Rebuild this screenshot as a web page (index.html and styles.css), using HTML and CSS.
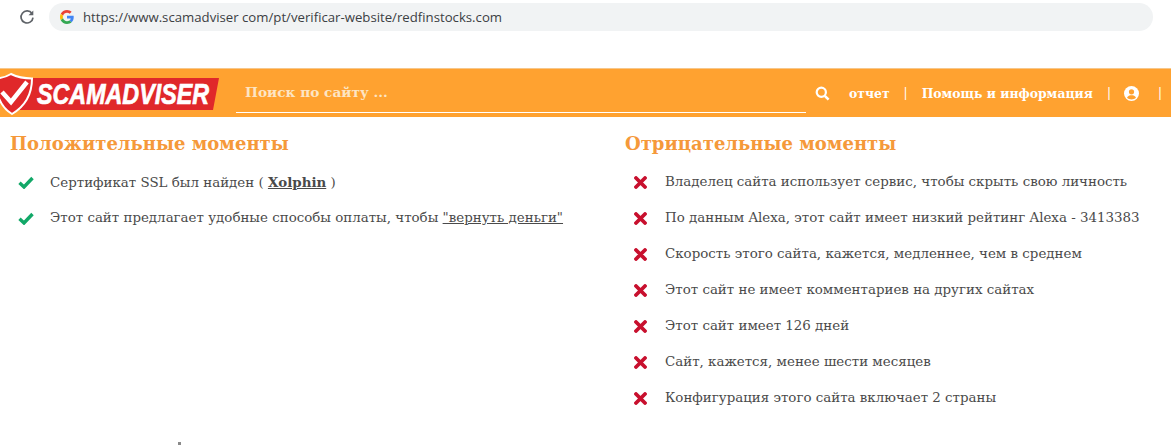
FILE: index.html
```html
<!DOCTYPE html>
<html lang="ru">
<head>
    <meta charset="UTF-8">
    <meta name="viewport" content="width=device-width, initial-scale=1.0">
    <title>Scamadviser</title>
    <link rel="stylesheet" href="styles.css">
</head>
<body>
    <!-- Icon shapes -->
    <svg class="icon-defs" width="0" height="0">
        <symbol id="icon-check" viewBox="0 0 16 13">
            <path d="M1.500 6.800L6 11L14.500 2" fill="none" stroke="#12a868" stroke-width="3.400"/>
        </symbol>
        <symbol id="icon-cross" viewBox="0 0 13 13">
            <path d="M2 2L11 11M11 2L2 11" fill="none" stroke="#c8102e" stroke-width="3.800" stroke-linecap="round"/>
        </symbol>
    </svg>

    <!-- Browser bar -->
    <div class="browser-bar">
        <svg class="reload-icon" width="16" height="16" viewBox="0 0 16 16">
            <path d="M13 4.600A6 6 0 1 0 14 8.600" fill="none" stroke="#5f6368" stroke-width="1.700"/>
            <path d="M14.300 1.400V6.200H9.500Z" fill="#5f6368"/>
        </svg>
        <div class="address-bar">
            <svg class="g-icon" width="14" height="14" viewBox="0 0 48 48">
                <path fill="#ea4335" d="M24 9.500c3.500 0 6.700 1.300 9.100 3.500l6.800-6.800C35.800 2.400 30.300 0 24 0 14.600 0 6.500 5.400 2.600 13.200l7.900 6.100C12.400 13.700 17.700 9.500 24 9.500z"/>
                <path fill="#4285f4" d="M47 24.500c0-1.600-.1-3.100-.4-4.500H24v9h12.900c-.6 3-2.200 5.500-4.700 7.200l7.600 5.900C44.300 37.900 47 31.800 47 24.500z"/>
                <path fill="#fbbc05" d="M10.500 28.700c-.5-1.400-.8-3-.8-4.700s.3-3.300.8-4.700l-7.900-6.100C.9 16.500 0 20.100 0 24s.9 7.500 2.600 10.800l7.900-6.100z"/>
                <path fill="#34a853" d="M24 48c6.500 0 11.900-2.100 15.800-5.900l-7.600-5.900c-2.100 1.400-4.900 2.300-8.200 2.300-6.300 0-11.600-4.200-13.500-9.800l-7.900 6.100C6.500 42.600 14.600 48 24 48z"/>
            </svg>
            <span class="url">https://www.scamadviser com/pt/verificar-website/redfinstocks.com</span>
        </div>
    </div>

    <!-- Header -->
    <header class="site-header">
        <svg class="logo" width="220" height="48" viewBox="0 0 220 48">
            <path d="M20 9H219L213 41H20Z" fill="#e0282a"/>
            <path d="M11 5C17 8 25 9.500 32 9.500C32 24 27 36 12 45C2 39 -4 29 -5 9.500C2 9.500 6 8 11 5Z" fill="#e0282a" stroke="#fff" stroke-width="2"/>
            <path d="M2 23L11 33L27 13" fill="none" stroke="#fff" stroke-width="4.500"/>
            <text class="logo-text" x="37" y="35" textLength="172" lengthAdjust="spacingAndGlyphs">SCAMADVISER</text>
        </svg>
        <div class="search-box">Поиск по сайту ...</div>
        <nav class="nav-links">
            <svg class="nav-search" width="15" height="15" viewBox="0 0 15 15">
                <circle cx="6.300" cy="6.300" r="4.600" fill="none" stroke="#fff" stroke-width="2.200"/>
                <path d="M9.800 9.800L13.600 13.600" stroke="#fff" stroke-width="2.600"/>
            </svg>
            <a class="nav-report">отчет</a>
            <span class="nav-sep">|</span>
            <a class="nav-help">Помощь и информация</a>
            <span class="nav-sep">|</span>
            <svg class="nav-user" width="15" height="15" viewBox="0 0 15 15">
                <circle cx="7.500" cy="7.500" r="7.500" fill="#fff"/>
                <circle cx="7.500" cy="5.800" r="2.600" fill="#ffa230"/>
                <path d="M3 11.800C4 9.800 5.500 9.300 7.500 9.300S11 9.800 12 11.800C10.800 13 9.300 13.500 7.500 13.500S4.200 13 3 11.800Z" fill="#ffa230"/>
            </svg>
            <span class="nav-sep">|</span>
        </nav>
    </header>

    <!-- Moments -->
    <main class="moments">
        <section>
            <h2>Положительные моменты</h2>
            <ul class="moments-list good">
                <li><svg class="mark"><use href="#icon-check"/></svg><span>Сертификат SSL был найден ( <a class="strong-link">Xolphin</a> )</span></li>
                <li><svg class="mark"><use href="#icon-check"/></svg><span>Этот сайт предлагает удобные способы оплаты, чтобы <a class="plain-link">"вернуть деньги"</a></span></li>
            </ul>
        </section>
        <section>
            <h2>Отрицательные моменты</h2>
            <ul class="moments-list bad">
                <li><svg class="mark"><use href="#icon-cross"/></svg><span>Владелец сайта использует сервис, чтобы скрыть свою личность</span></li>
                <li><svg class="mark"><use href="#icon-cross"/></svg><span>По данным Alexa, этот сайт имеет низкий рейтинг Alexa - 3413383</span></li>
                <li><svg class="mark"><use href="#icon-cross"/></svg><span>Скорость этого сайта, кажется, медленнее, чем в среднем</span></li>
                <li><svg class="mark"><use href="#icon-cross"/></svg><span>Этот сайт не имеет комментариев на других сайтах</span></li>
                <li><svg class="mark"><use href="#icon-cross"/></svg><span>Этот сайт имеет 126 дней</span></li>
                <li><svg class="mark"><use href="#icon-cross"/></svg><span>Сайт, кажется, менее шести месяцев</span></li>
                <li><svg class="mark"><use href="#icon-cross"/></svg><span>Конфигурация этого сайта включает 2 страны</span></li>
            </ul>
        </section>
    </main>
    <div class="cut-mark"></div>
</body>
</html>
```

FILE: styles.css
```css
html, body {
    height: 445px;
    overflow: hidden;
}

body {
    margin: 0;
    background-color: #fff;
    font-family: "DejaVu Serif", serif;
    color: #4a4a4a;
}

.icon-defs {
    display: block;
}

/* Browser bar */
.browser-bar {
    display: flex;
    align-items: center;
    height: 34px;
    margin-bottom: 34px;
}

.reload-icon {
    margin-left: 19px;
    margin-right: 14px;
}

.address-bar {
    display: flex;
    align-items: center;
    width: 1104px;
    height: 28px;
    background-color: #f1f3f4;
    border-radius: 14px;
}

.g-icon {
    margin-left: 11px;
    margin-right: 9px;
}

.url {
    font-family: "Open Sans", sans-serif;
    font-size: 13.2px;
    color: #3c4043;
}

/* Header */
.site-header {
    display: flex;
    align-items: center;
    height: 49px;
    background-color: #ffa230;
    border-top: 1px solid #f7c78a;
    box-sizing: border-box;
}

.logo {
    flex: none;
    overflow: visible;
}

.logo-text {
    font-family: "Liberation Sans", sans-serif;
    font-weight: bold;
    font-style: italic;
    font-size: 29px;
    fill: #fff;
    stroke: #fff;
    stroke-width: 0.7px;
}

.search-box {
    flex: none;
    align-self: flex-start;
    box-sizing: border-box;
    width: 570px;
    height: 44px;
    margin-left: 16px;
    padding: 15px 0 0 9px;
    border-bottom: 1px solid #fff;
    color: #fde5c4;
    font-size: 13.7px;
    font-weight: bold;
}

.nav-links {
    display: flex;
    align-items: center;
    color: #fff;
    font-size: 12.4px;
    font-weight: bold;
    white-space: nowrap;
}

.nav-search {
    flex: none;
    margin-left: 9px;
    margin-right: 19px;
}

.nav-sep {
    font-weight: normal;
    font-size: 12px;
    margin: 0 14px;
}

.nav-user {
    flex: none;
    margin-left: -1px;
    margin-right: 5px;
}

/* Moments */
.moments {
    display: grid;
    grid-template-columns: 615px 1fr;
    height: 325px;
    padding: 15px 0 0 10px;
    box-sizing: border-box;
}

h2 {
    margin: 0 0 17px;
    color: #f5993a;
    font-size: 18px;
    line-height: 24px;
    font-weight: bold;
}

.moments-list {
    list-style: none;
    margin: 0;
    padding: 0;
}

.moments-list li {
    display: flex;
    height: 36px;
    line-height: 18px;
    font-size: 13.4px;
}

.mark {
    flex: none;
    margin-top: 3px;
}

.good .mark {
    width: 16px;
    height: 13px;
    margin-left: 8px;
    margin-right: 16px;
}

.bad .mark {
    width: 13px;
    height: 13px;
    margin-left: 9px;
    margin-right: 18px;
}

.strong-link {
    font-weight: bold;
    text-decoration: underline;
}

.plain-link {
    text-decoration: underline;
}

.cut-mark {
    width: 3px;
    height: 4px;
    margin-left: 178px;
    background-color: #8a8a8a;
}
```
